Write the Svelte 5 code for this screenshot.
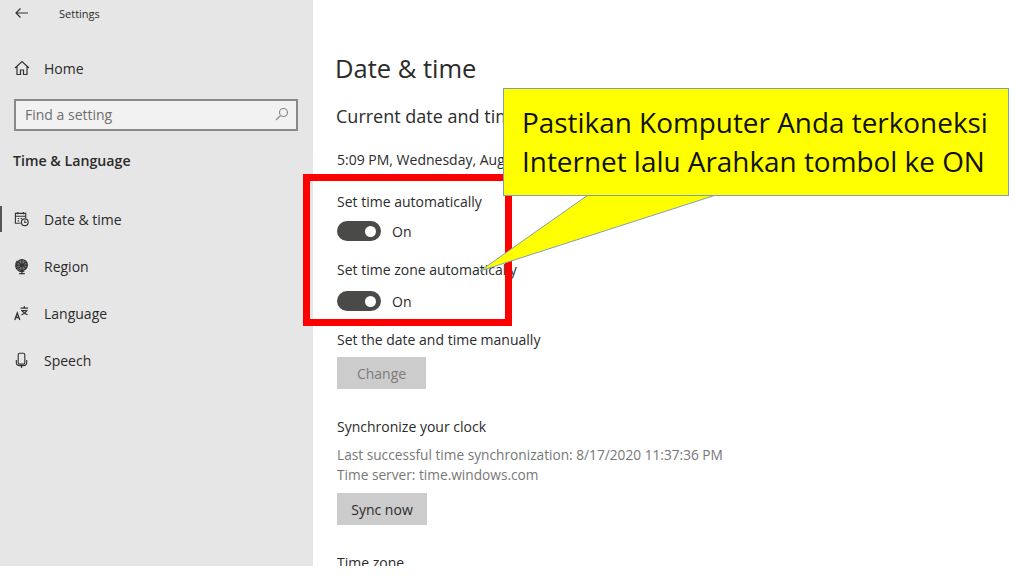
<script>
  const nav = [
    { label: 'Date & time', icon: 'date', active: true },
    { label: 'Region', icon: 'region' },
    { label: 'Language', icon: 'language' },
    { label: 'Speech', icon: 'speech' }
  ];
</script>

<div class="window">
  <aside class="sidebar">
    <div class="titlebar">
      <svg class="back" width="14" height="12" viewBox="0 0 14 12" fill="none" stroke="#333" stroke-width="1.2">
        <path d="M14 6H2M6.500 1.500 2 6 6.500 10.500" />
      </svg>
      <span>Settings</span>
    </div>

    <div class="home">
      <svg width="16" height="16" viewBox="0 0 16 16" fill="none" stroke="#333" stroke-width="1.2">
        <path d="M1 8 8 1.500 15 8M3 6.500V14.500H6.500V10H9.500V14.500H13V6.500" />
      </svg>
      <span>Home</span>
    </div>

    <div class="search">
      <span>Find a setting</span>
      <svg width="14" height="14" viewBox="0 0 14 14" fill="none" stroke="#888" stroke-width="1.1">
        <circle cx="8.500" cy="5.500" r="4" />
        <path d="M5.500 8.500 1 13" />
      </svg>
    </div>

    <h2>Time &amp; Language</h2>

    <nav>
      {#each nav as item}
        <div class="nav-item">
          {#if item.active}<i class="marker"></i>{/if}
          <span class="nav-icon">
            {#if item.icon === 'date'}
              <svg width="16" height="16" viewBox="0 0 16 16" fill="none" stroke="#333" stroke-width="1.200">
                <path d="M7 12.500H1.500V2H12.500V7M1.500 5H12.500M4 .5V3M10 .5V3M4 7.500H5.500M7 7.500H8.500M4 10H5.500" />
                <circle cx="11.500" cy="11.500" r="3.600" fill="#e6e6e6" />
                <path d="M11.500 9.500V11.700H13.300" />
              </svg>
            {:else if item.icon === 'region'}
              <svg width="16" height="17" viewBox="0 0 16 17" fill="none" stroke="#333" stroke-width="1.300">
                <circle cx="8.500" cy="7" r="5.800" fill="#777" />
                <path d="M3.500 2.500C.5 6 1.500 11 5 13C7 14.200 9.500 14 11 13.300M8.500 13.500V16M5.500 16H11.500M4 3.500 13 10.500M13 3.500 4.500 10.500M3 7H14M8.500 1.500V12.500" />
              </svg>
            {:else if item.icon === 'language'}
              <svg width="16" height="16" viewBox="0 0 16 16" fill="none" stroke="#333" stroke-width="1.200">
                <path d="M.8 15.500 3.500 8 6.200 15.500M1.800 12.800H5.200" stroke-width="1.400" />
                <path d="M7 2.800H15M11 .5V2.800M7.500 5.500H14.500M13.500 5.500C12.800 7.500 10.500 9 8 10M9 6C10 7.500 12 9 14.500 9.800" />
              </svg>
            {:else}
              <svg width="16" height="17" viewBox="0 0 16 17" fill="none" stroke="#333" stroke-width="1.200">
                <rect x="4.500" y=".8" width="7" height="11.500" rx="1.500" />
                <path d="M2.500 8V11C2.500 13 4 14 6 14H10C12 14 13.500 13 13.500 11V8M8 14V16.500" />
              </svg>
            {/if}
          </span>
          <span>{item.label}</span>
        </div>
      {/each}
    </nav>
  </aside>

  <main class="content">
    <h1>Date &amp; time</h1>
    <h3>Current date and time</h3>
    <p class="now">5:09 PM, Wednesday, August 19, 2020</p>

    <p class="label first">Set time automatically</p>
    <div class="toggle-row"><span class="toggle"><i></i></span><span>On</span></div>

    <p class="label second">Set time zone automatically</p>
    <div class="toggle-row lower"><span class="toggle"><i></i></span><span>On</span></div>

    <p class="label manual">Set the date and time manually</p>
    <button class="btn disabled">Change</button>

    <p class="label sync">Synchronize your clock</p>
    <p class="muted">Last successful time synchronization: 8/17/2020 11:37:36 PM</p>
    <p class="muted">Time server: time.windows.com</p>
    <button class="btn">Sync now</button>

    <p class="label zone">Time zone</p>
  </main>

  <!-- annotations drawn over the screenshot -->
  <div class="highlight"></div>
  <svg class="tail" width="260" height="90" viewBox="0 0 260 90">
    <path d="M108 0 0 76 236 0" fill="#ff0" stroke="#7f9fb5" stroke-width="1" />
  </svg>
  <div class="callout">
    Pastikan Komputer Anda terkoneksi<br />Internet lalu Arahkan tombol ke ON
  </div>
</div>

<style>
  :global(body) {
    margin: 0;
    background: #fff;
  }
  .window {
    position: relative;
    display: flex;
    width: 1022px;
    height: 566px;
    overflow: hidden;
    font-family: "Open Sans", "Noto Sans", sans-serif;
    color: #2b2b2b;
    font-size: 14px;
  }
  .sidebar {
    width: 313px;
    flex-shrink: 0;
    background: #e6e6e6;
    box-sizing: border-box;
    padding: 5px 0 0 14px;
  }
  .titlebar {
    display: flex;
    align-items: center;
    gap: 31px;
    height: 16px;
    font-size: 11px;
  }
  .home {
    display: flex;
    align-items: center;
    gap: 14px;
    margin-top: 37px;
    height: 20px;
  }
  .search {
    display: flex;
    align-items: center;
    justify-content: space-between;
    box-sizing: border-box;
    width: 284px;
    height: 32px;
    margin-top: 21px;
    padding: 0 7px 2px 9px;
    background: #f2f2f2;
    border: 2px solid #8a8a8a;
    color: #6f6f6f;
  }
  h2 {
    margin: 20px 0 0 -1px;
    font-size: 14.200px;
    font-weight: 600;
    line-height: 20px;
  }
  nav {
    margin-top: 38px;
    display: flex;
    flex-direction: column;
    gap: 27.200px;
  }
  .nav-item {
    position: relative;
    display: flex;
    align-items: center;
    gap: 15px;
    height: 20px;
  }
  .nav-icon {
    display: flex;
    width: 15px;
  }
  .marker {
    position: absolute;
    left: -14px;
    top: -3px;
    width: 2px;
    height: 26px;
    background: #555;
  }
  .content {
    flex: 1;
    padding: 0 0 0 24px;
  }
  h1 {
    margin: 50px 0 0 -2px;
    font-size: 25.500px;
    font-weight: 400;
    line-height: 36px;
  }
  h3 {
    margin: 18px 0 0 -1px;
    font-size: 18px;
    font-weight: 400;
    line-height: 24px;
  }
  p {
    margin: 0;
    line-height: 20px;
  }
  .now { margin-top: 22px; }
  .first { margin-top: 22px; }
  .second { margin-top: 19px; }
  .manual { margin-top: 19px; }
  .sync { margin-top: 28px; }
  .sync + .muted { margin-top: 8px; }
  .zone { margin-top: 28px; }
  .muted { color: #777; font-size: 13.700px; }
  .toggle-row {
    display: flex;
    align-items: center;
    gap: 11px;
    height: 20px;
    margin-top: 9px;
  }
  .toggle-row.lower { margin-top: 11px; }
  .toggle {
    display: flex;
    align-items: center;
    justify-content: flex-end;
    box-sizing: border-box;
    width: 44px;
    height: 20px;
    padding-right: 5px;
    border-radius: 10px;
    background: #4a4a48;
  }
  .toggle i {
    width: 11px;
    height: 11px;
    border-radius: 50%;
    background: #fff;
  }
  .btn {
    display: block;
    height: 32px;
    width: 90px;
    padding: 0;
    border: 0;
    background: #cccccc;
    color: #2b2b2b;
    font: inherit;
  }
  .manual + .btn { margin-top: 7px; width: 89px; }
  .disabled { color: #7c7c7c; }
  .muted + .btn { margin-top: 8px; }
  .highlight {
    position: absolute;
    left: 303px;
    top: 174px;
    width: 209px;
    height: 152px;
    box-sizing: border-box;
    border: 7px solid #f00;
  }
  .tail {
    position: absolute;
    left: 480px;
    top: 195px;
  }
  .callout {
    position: absolute;
    left: 503px;
    top: 88px;
    width: 506px;
    height: 108px;
    box-sizing: border-box;
    padding: 14px 0 0 18px;
    background: #ff0;
    border: 1px solid #7f9fb5;
    color: #111;
    font-size: 27.900px;
    line-height: 39px;
    white-space: nowrap;
  }
</style>
